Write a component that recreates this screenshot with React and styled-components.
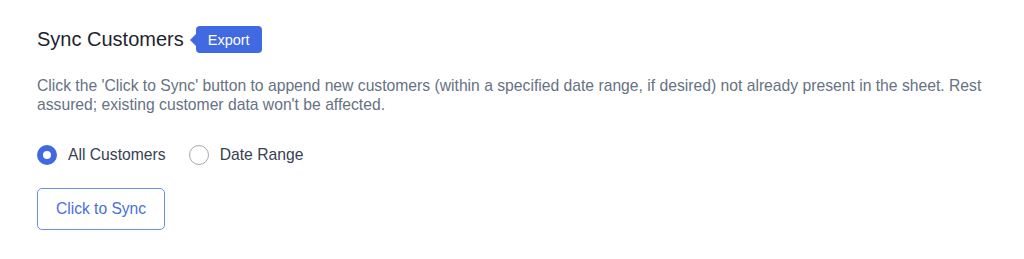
import React, { useState } from "react";
import styled, { createGlobalStyle } from "styled-components";

const Global = createGlobalStyle`
  html, body { margin: 0; padding: 0; background: #fff; }
  body { font-family: "Liberation Sans", Arial, sans-serif; }
  * { box-sizing: border-box; }
`;

const Section = styled.section`
  padding: 26px 37px 0 37px;
  width: 1024px;
`;

const Header = styled.div`
  display: flex;
  align-items: center;
  gap: 12px;
  height: 27px;
`;

const Title = styled.h2`
  margin: 0;
  font-size: 20px;
  line-height: 27px;
  font-weight: 400;
  color: #1f2430;
`;

const Badge = styled.span`
  position: relative;
  display: inline-flex;
  align-items: center;
  height: 27px;
  padding: 0 12px;
  background: #4169e1;
  color: #fff;
  font-size: 14.5px;
  border-radius: 4px;
  &::before {
    content: "";
    position: absolute;
    left: -6px;
    top: 50%;
    transform: translateY(-50%);
    border-top: 6px solid transparent;
    border-bottom: 6px solid transparent;
    border-right: 6px solid #4169e1;
  }
`;

const Description = styled.p`
  margin: 23px 0 0 0;
  font-size: 15.7px;
  line-height: 19px;
  color: #667284;
  max-width: 950px;
`;

const RadioGroup = styled.div`
  display: flex;
  align-items: center;
  gap: 23px;
  margin-top: 31px;
  height: 20px;
`;

const RadioLabel = styled.label`
  display: inline-flex;
  align-items: center;
  gap: 11px;
  font-size: 15.7px;
  line-height: 20px;
  color: #374151;
  cursor: pointer;
`;

const RadioCircle = styled.span`
  width: 20px;
  height: 20px;
  border-radius: 50%;
  border: ${(p) => (p.$checked ? "6px solid #4169e1" : "1.5px solid #a8a8a8")};
  background: #fff;
`;

const HiddenInput = styled.input`
  display: none;
`;

const SyncButton = styled.button`
  display: block;
  margin-top: 23px;
  width: 128px;
  height: 42px;
  border: 1px solid #6f8ee8;
  border-radius: 5px;
  background: #fff;
  color: #4a6ee0;
  font-family: "Liberation Sans", Arial, sans-serif;
  font-size: 15.6px;
  cursor: pointer;
`;

export default function App() {
  const [mode, setMode] = useState("all");
  const options = [
    { id: "all", label: "All Customers" },
    { id: "range", label: "Date Range" },
  ];
  return (
    <>
      <Global />
      <Section>
        <Header>
          <Title>Sync Customers</Title>
          <Badge>Export</Badge>
        </Header>
        <Description>
          Click the 'Click to Sync' button to append new customers (within a specified date range, if desired) not already present in the sheet. Rest assured; existing customer data won't be affected.
        </Description>
        <RadioGroup>
          {options.map((o) => (
            <RadioLabel key={o.id}>
              <HiddenInput type="radio" name="mode" checked={mode === o.id} onChange={() => setMode(o.id)} />
              <RadioCircle $checked={mode === o.id} />
              {o.label}
            </RadioLabel>
          ))}
        </RadioGroup>
        <SyncButton>Click to Sync</SyncButton>
      </Section>
    </>
  );
}
